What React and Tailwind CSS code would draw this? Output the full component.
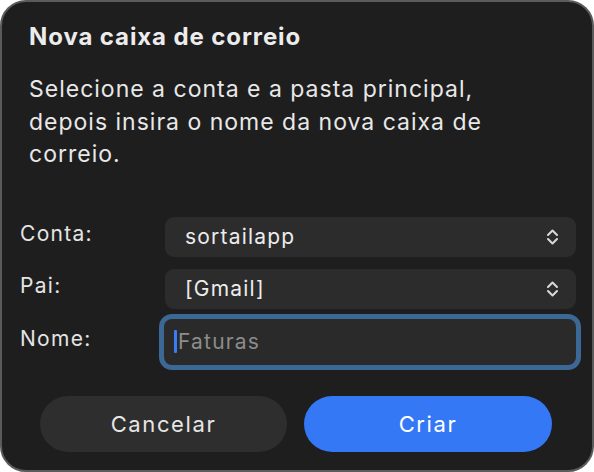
import React from "react";

const Chevrons = () => (
  <svg width="13" height="18" viewBox="0 0 13 18" fill="none" stroke="#d6d6d6" strokeWidth="2.1" strokeLinecap="round" strokeLinejoin="round">
    <path d="M2 7 L6.5 2.5 L11 7" />
    <path d="M2 11 L6.5 15.5 L11 11" />
  </svg>
);

const Row = ({ label, children, className = "" }) => (
  <div className={`flex items-center ${className}`}>
    <span className="w-[145px] shrink-0 mb-[6px] text-[21px] leading-[26px] tracking-[1.3px] text-[#e4e4e4]">{label}</span>
    <div className="flex-1">{children}</div>
  </div>
);

const Select = ({ value }) => (
  <div className="h-10 rounded-[9px] bg-[#2c2c2c] flex items-center justify-between pl-5 pr-[17px]">
    <span className="text-[21px] tracking-[1.2px] text-[#ececec]">{value}</span>
    <Chevrons />
  </div>
);

export default function App() {
  return (
    <div className="w-[594px] h-[472px] bg-white" style={{ fontFamily: "Inter, 'Noto Sans', sans-serif" }}>
      <div className="w-full h-full rounded-[26px] border-2 border-[#5b5b5b] bg-[#1e1e1e] flex flex-col">
        {/* header */}
        <div className="px-[27px] pt-[21px]">
          <h1 className="text-[24px] font-bold text-[#ececec] leading-[28px] tracking-[0.9px]">Nova caixa de correio</h1>
          <p className="mt-[22px] text-[23px] leading-[32.5px] tracking-[1px] text-[#e8e8e8] whitespace-nowrap">
            Selecione a conta e a pasta principal,
            <br />
            depois insira o nome da nova caixa de
            <br />
            correio.
          </p>
        </div>

        {/* form */}
        <div className="mt-[46px] pl-[18px] pr-4 flex flex-col">
          <Row label="Conta:">
            <Select value="sortailapp" />
          </Row>
          <Row label="Pai:" className="mt-3">
            <Select value="[Gmail]" />
          </Row>
          <Row label="Nome:" className="mt-[10px]">
            <div className="-ml-[1px] h-[46px] rounded-[8px] bg-[#2a2a2a] ring-[5px] ring-[#3b6894] flex items-center pl-[10px]">
              <span className="w-[3px] h-[23px] bg-[#3a7bf7] rounded-[1px]" />
              <span className="text-[21px] tracking-[1.2px] text-[#8c8c8c] ml-[1px]">Faturas</span>
            </div>
          </Row>
        </div>

        {/* buttons */}
        <div className="mt-auto mb-[18px] pl-[38px] flex gap-[17px]">
          <button className="w-[247px] h-14 rounded-full bg-[#2e2e2e] text-[22px] tracking-[1.6px] text-[#e6e6e6]">Cancelar</button>
          <button className="w-[248px] h-14 rounded-full bg-[#3478f6] text-[22px] tracking-[1.6px] text-white">Criar</button>
        </div>
      </div>
    </div>
  );
}
